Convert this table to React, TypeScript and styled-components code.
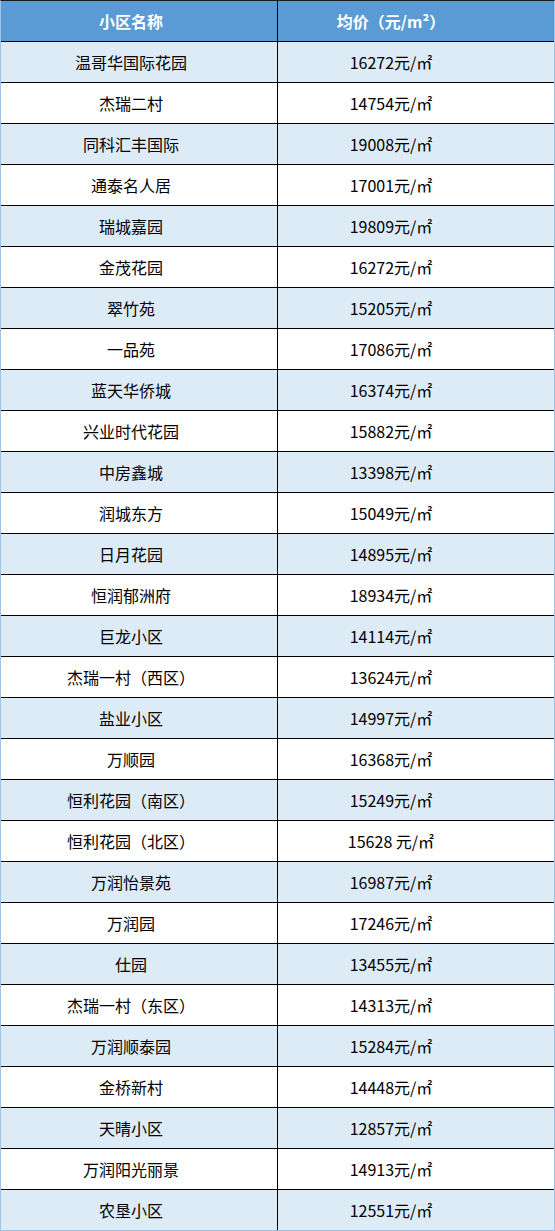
import React from "react";
import styled, { createGlobalStyle } from "styled-components";

const GlobalStyle = createGlobalStyle`
  html, body {
    margin: 0;
    padding: 0;
    background: #ffffff;
  }
  * { box-sizing: border-box; }
`;

const Table = styled.div`
  width: 555px;
  border-top: 1px solid #1a1a1a;
  border-left: 1px solid #9dc3e6;
  border-right: 1px solid #9dc3e6;
  border-bottom: 1px solid #9dc3e6;
  font-family: "Noto Sans CJK SC", "Microsoft YaHei", sans-serif;
  display: flex;
  flex-direction: column;
`;

const Row = styled.div<{ $tone: "head" | "blue" | "white"; $last?: boolean }>`
  display: grid;
  grid-template-columns: 277px 276px;
  height: ${(p) => (p.$last ? "40px" : "41px")};
  border-bottom: ${(p) => (p.$last ? "none" : "1px solid #000")};
  background: ${(p) =>
    p.$tone === "head" ? "#5b9bd5" : p.$tone === "blue" ? "#ddebf7" : "#ffffff"};
  color: ${(p) => (p.$tone === "head" ? "#ffffff" : "#000000")};
  font-weight: ${(p) => (p.$tone === "head" ? 700 : 400)};
`;

const Cell = styled.div<{ $side: "left" | "right" }>`
  display: flex;
  align-items: center;
  justify-content: center;
  font-size: 16px;
  line-height: 1;
  white-space: pre;
  border-right: ${(p) => (p.$side === "left" ? "1px solid #000" : "none")};
  padding-right: ${(p) => (p.$side === "left" ? "16px" : "50px")};
`;

const data: [string, string][] = [
  ["温哥华国际花园", "16272元/㎡"],
  ["杰瑞二村", "14754元/㎡"],
  ["同科汇丰国际", "19008元/㎡"],
  ["通泰名人居", "17001元/㎡"],
  ["瑞城嘉园", "19809元/㎡"],
  ["金茂花园", "16272元/㎡"],
  ["翠竹苑", "15205元/㎡"],
  ["一品苑", "17086元/㎡"],
  ["蓝天华侨城", "16374元/㎡"],
  ["兴业时代花园", "15882元/㎡"],
  ["中房鑫城", "13398元/㎡"],
  ["润城东方", "15049元/㎡"],
  ["日月花园", "14895元/㎡"],
  ["恒润郁洲府", "18934元/㎡"],
  ["巨龙小区", "14114元/㎡"],
  ["杰瑞一村（西区）", "13624元/㎡"],
  ["盐业小区", "14997元/㎡"],
  ["万顺园", "16368元/㎡"],
  ["恒利花园（南区）", "15249元/㎡"],
  ["恒利花园（北区）", "15628 元/㎡"],
  ["万润怡景苑", "16987元/㎡"],
  ["万润园", "17246元/㎡"],
  ["仕园", "13455元/㎡"],
  ["杰瑞一村（东区）", "14313元/㎡"],
  ["万润顺泰园", "15284元/㎡"],
  ["金桥新村", "14448元/㎡"],
  ["天晴小区", "12857元/㎡"],
  ["万润阳光丽景", "14913元/㎡"],
  ["农垦小区", "12551元/㎡"],
];

export default function App() {
  return (
    <>
      <GlobalStyle />
      <Table>
        <Row $tone="head">
          <Cell $side="left">小区名称</Cell>
          <Cell $side="right">均价（元/m²）</Cell>
        </Row>
        {data.map(([name, price], i) => (
          <Row
            key={i}
            $tone={i % 2 === 0 ? "blue" : "white"}
            $last={i === data.length - 1}
          >
            <Cell $side="left">{name}</Cell>
            <Cell $side="right">{price}</Cell>
          </Row>
        ))}
      </Table>
    </>
  );
}
